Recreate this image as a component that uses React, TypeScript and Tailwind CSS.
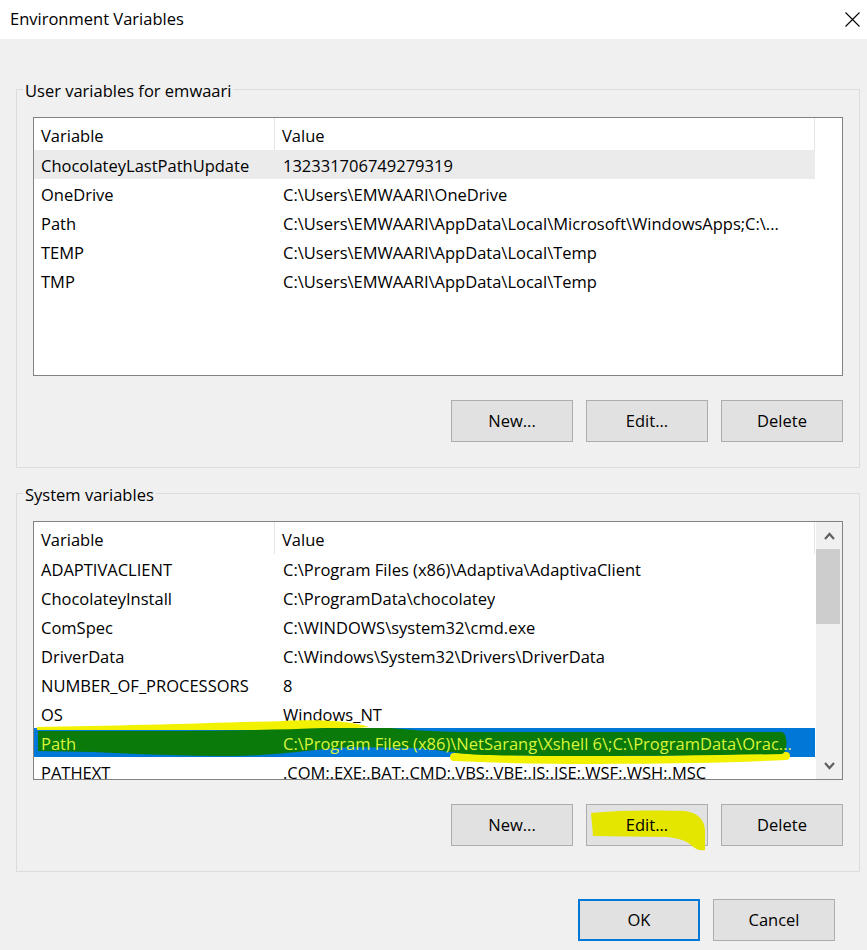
import React from "react"

type Row = { name: string; value: string }

const userVars: Row[] = [
  { name: "ChocolateyLastPathUpdate", value: "132331706749279319" },
  { name: "OneDrive", value: "C:\\Users\\EMWAARI\\OneDrive" },
  { name: "Path", value: "C:\\Users\\EMWAARI\\AppData\\Local\\Microsoft\\WindowsApps;C:\\..." },
  { name: "TEMP", value: "C:\\Users\\EMWAARI\\AppData\\Local\\Temp" },
  { name: "TMP", value: "C:\\Users\\EMWAARI\\AppData\\Local\\Temp" },
]

const systemVars: Row[] = [
  { name: "ADAPTIVACLIENT", value: "C:\\Program Files (x86)\\Adaptiva\\AdaptivaClient" },
  { name: "ChocolateyInstall", value: "C:\\ProgramData\\chocolatey" },
  { name: "ComSpec", value: "C:\\WINDOWS\\system32\\cmd.exe" },
  { name: "DriverData", value: "C:\\Windows\\System32\\Drivers\\DriverData" },
  { name: "NUMBER_OF_PROCESSORS", value: "8" },
  { name: "OS", value: "Windows_NT" },
  { name: "Path", value: "C:\\Program Files (x86)\\NetSarang\\Xshell 6\\;C:\\ProgramData\\Orac..." },
  { name: "PATHEXT", value: ".COM;.EXE;.BAT;.CMD;.VBS;.VBE;.JS;.JSE;.WSF;.WSH;.MSC" },
]

function WinButton({ label, primary, marker }: { label: string; primary?: boolean; marker?: boolean }) {
  return (
    <button
      className={
        "relative w-[122px] h-[42px] bg-[#e1e1e1] text-[16.5px] text-black " +
        (primary ? "border-2 border-[#0078d7]" : "border border-[#adadad]")
      }
    >
      {marker && (
        <svg className="absolute left-0 top-0 overflow-visible" width="122" height="42">
          <path
            d="M4 8 C 30 5, 70 5, 98 6 C 112 8, 118 16, 118 26 L 118 45 C 112 46, 108 44, 104 40 C 98 35, 90 33, 80 32 L 6 31 Z"
            fill="#e4e600"
          />
        </svg>
      )}
      <span className="relative">{label}</span>
    </button>
  )
}

// highlighter scribble drawn over the selected Path row
function Scribble() {
  return (
    <svg className="absolute left-0 top-0 overflow-visible pointer-events-none" width="781" height="29">
      <path d="M3 -1 C 80 -2, 180 -5, 250 -7 C 290 -9, 320 -6, 335 -1 L 300 2 L 3 2 Z" fill="#f2f200" />
      <path d="M420 29 C 500 33, 650 33, 752 28" stroke="#f2f200" strokeWidth="8" fill="none" strokeLinecap="round" />
      <path
        d="M4 3 L 100 3 C 180 3, 240 2, 290 0 L 355 0 C 380 2, 400 4, 440 4 L 748 4 C 754 6, 754 24, 748 26 C 650 28, 520 29, 450 27 C 420 26, 405 21, 380 20 L 320 19 C 290 20, 240 28, 200 28 C 150 28, 100 26, 60 24 L 4 23 Z"
        fill="#0a7a0a"
      />
    </svg>
  )
}

function ListView({ rows, hover, selected, scroll }: { rows: Row[]; hover?: number; selected?: number; scroll?: boolean }) {
  return (
    <div className="flex h-[259px] w-full border border-[#828282] bg-white overflow-hidden">
      <div className="flex-1 flex flex-col min-w-0">
        <div className="flex h-[32px] shrink-0">
          <div className="w-[241px] pl-[7px] pt-[4px] flex items-center border-r border-[#e5e5e5]">Variable</div>
          <div className="w-[540px] pl-[7px] pt-[4px] flex items-center border-r border-[#e5e5e5]">Value</div>
          <div className="flex-1" />
        </div>
        {rows.map((r, i) => {
          const isSel = i === selected
          const isHover = i === hover
          return (
            <div
              key={r.name}
              className={
                "relative flex h-[29px] shrink-0 w-[781px] " +
                (isSel ? "bg-[#0078d7] text-[#d9f53a]" : isHover ? "bg-[#ebebeb]" : "")
              }
            >
              {isSel && <Scribble />}
              <div className="relative w-[241px] pl-[7px] pt-[4px] flex items-center whitespace-nowrap">{r.name}</div>
              <div className="relative w-[540px] pl-[8px] pr-[6px] pt-[4px] flex items-center whitespace-nowrap overflow-hidden">
                <span className="truncate">{r.value}</span>
              </div>
            </div>
          )
        })}
      </div>
      {scroll && (
        <div className="w-[26px] shrink-0 bg-[#f0f0f0] flex flex-col">
          <div className="h-[27px] flex items-center justify-center">
            <svg width="11" height="8" viewBox="0 0 11 8">
              <polyline points="1,7 5.5,2 10,7" fill="none" stroke="#606060" strokeWidth="2.2" />
            </svg>
          </div>
          <div className="h-[75px] bg-[#cdcdcd] mr-[2px]" />
          <div className="flex-1" />
          <div className="h-[27px] flex items-center justify-center">
            <svg width="11" height="8" viewBox="0 0 11 8">
              <polyline points="1,1 5.5,6 10,1" fill="none" stroke="#606060" strokeWidth="2.2" />
            </svg>
          </div>
        </div>
      )}
    </div>
  )
}

function Group({ title, top, children }: { title: string; top: string; children: React.ReactNode }) {
  return (
    <fieldset className={"ml-4 w-[844px] border border-[#dcdcdc] p-0 " + top}>
      <legend className="ml-[6px] px-[2px] leading-[24px]">
        <span className="relative top-[2px]">{title}</span>
      </legend>
      <div className="px-4 pt-4 pb-[25px]">{children}</div>
    </fieldset>
  )
}

export default function App() {
  return (
    <div className="w-[867px] h-[950px] bg-[#f0f0f0] text-[16.5px] text-black font-['Open_Sans','Noto_Sans',sans-serif] overflow-hidden">
      {/* title bar */}
      <div className="h-[39px] bg-white flex items-center justify-between pl-[10px] pr-[7px]">
        <span className="text-[16.5px]">Environment Variables</span>
        <svg width="15" height="15" viewBox="0 0 15 15">
          <path d="M0.5 0.5 L14.5 14.5 M14.5 0.5 L0.5 14.5" stroke="#000" strokeWidth="1.1" />
        </svg>
      </div>

      <Group title="User variables for emwaari" top="mt-[38px]">
        <ListView rows={userVars} hover={0} />
        <div className="mt-[24px] flex justify-end gap-[13px]">
          <WinButton label="New..." />
          <WinButton label="Edit..." />
          <WinButton label="Delete" />
        </div>
      </Group>

      <Group title="System variables" top="mt-[13px]">
        <ListView rows={systemVars} selected={6} scroll />
        <div className="mt-[24px] flex justify-end gap-[13px]">
          <WinButton label="New..." />
          <WinButton label="Edit..." marker />
          <WinButton label="Delete" />
        </div>
      </Group>

      <div className="mt-[27px] pr-[32px] flex justify-end gap-[13px]">
        <WinButton label="OK" primary />
        <WinButton label="Cancel" />
      </div>
    </div>
  )
}
